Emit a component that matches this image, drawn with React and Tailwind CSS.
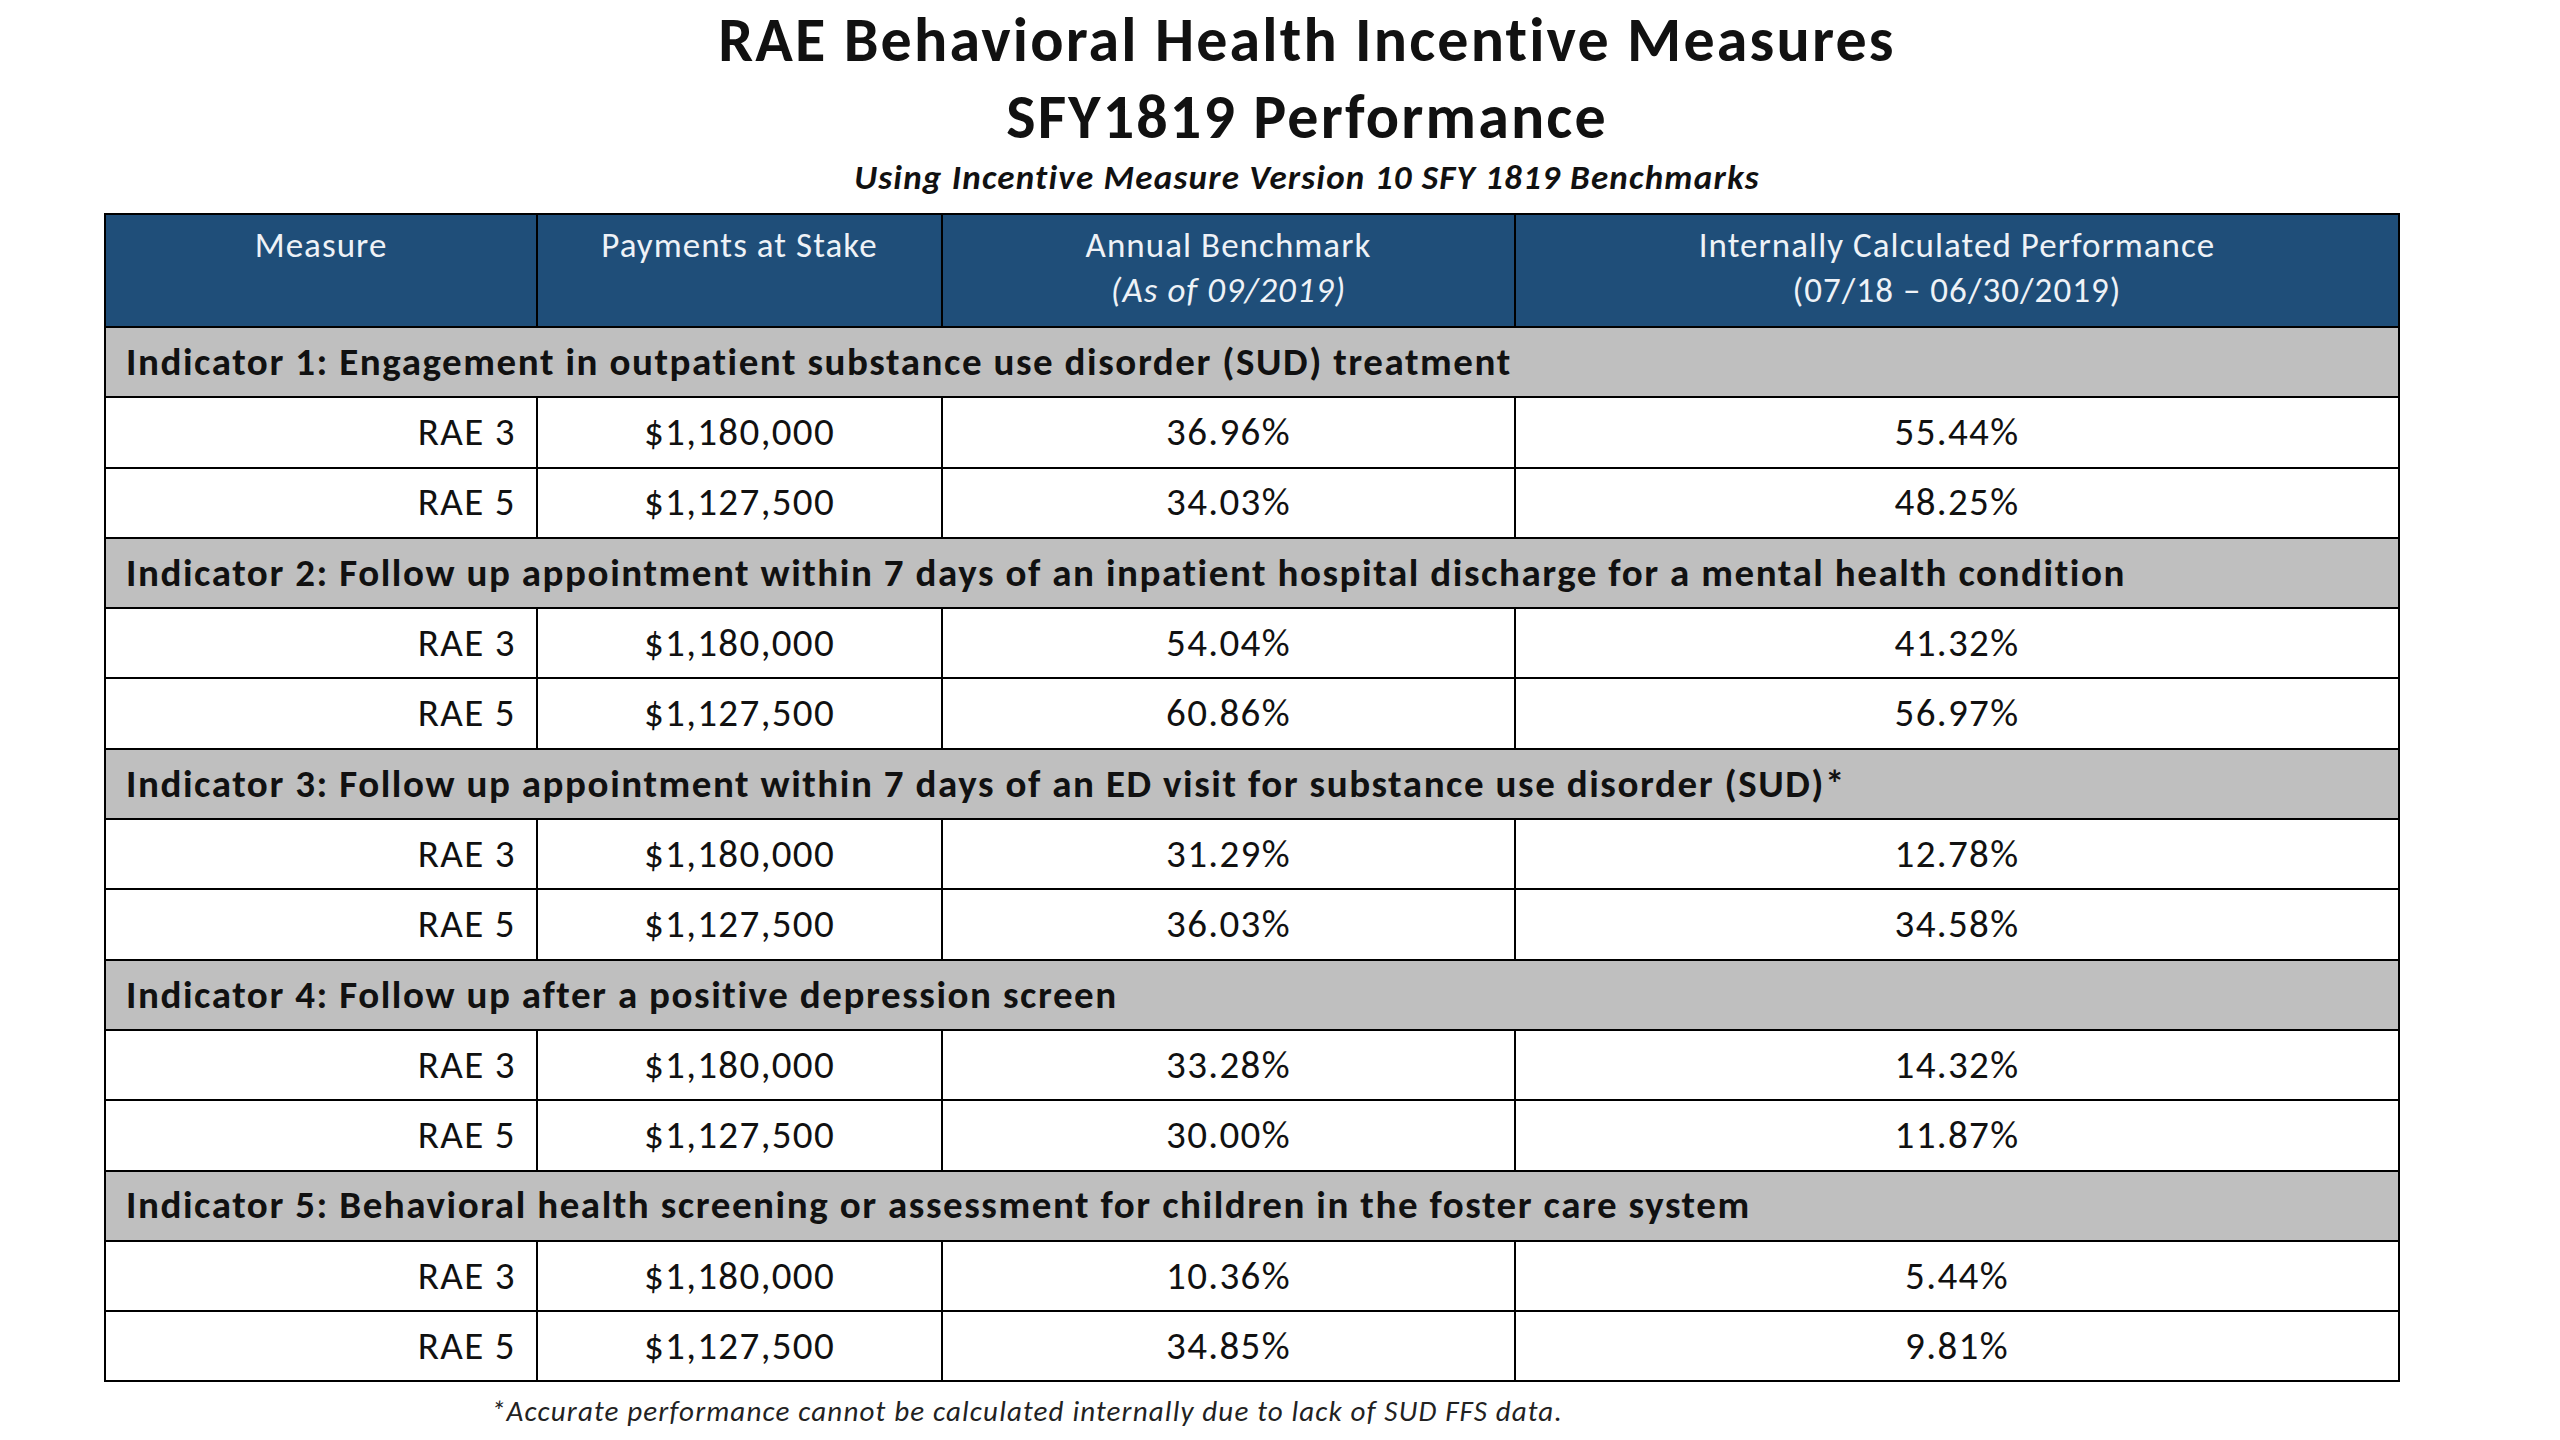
const indicators = [
  {
    title: "Indicator 1: Engagement in outpatient substance use disorder (SUD) treatment",
    rows: [
      { rae: "RAE 3", pay: "$1,180,000", bench: "36.96%", perf: "55.44%" },
      { rae: "RAE 5", pay: "$1,127,500", bench: "34.03%", perf: "48.25%" },
    ],
  },
  {
    title: "Indicator 2: Follow up appointment within 7 days of an inpatient hospital discharge for a mental health condition",
    rows: [
      { rae: "RAE 3", pay: "$1,180,000", bench: "54.04%", perf: "41.32%" },
      { rae: "RAE 5", pay: "$1,127,500", bench: "60.86%", perf: "56.97%" },
    ],
  },
  {
    title: "Indicator 3: Follow up appointment within 7 days of an ED visit for substance use disorder (SUD)*",
    rows: [
      { rae: "RAE 3", pay: "$1,180,000", bench: "31.29%", perf: "12.78%" },
      { rae: "RAE 5", pay: "$1,127,500", bench: "36.03%", perf: "34.58%" },
    ],
  },
  {
    title: "Indicator 4: Follow up after a positive depression screen",
    rows: [
      { rae: "RAE 3", pay: "$1,180,000", bench: "33.28%", perf: "14.32%" },
      { rae: "RAE 5", pay: "$1,127,500", bench: "30.00%", perf: "11.87%" },
    ],
  },
  {
    title: "Indicator 5: Behavioral health screening or assessment for children in the foster care system",
    rows: [
      { rae: "RAE 3", pay: "$1,180,000", bench: "10.36%", perf: "5.44%" },
      { rae: "RAE 5", pay: "$1,127,500", bench: "34.85%", perf: "9.81%" },
    ],
  },
];

export default function App() {
  return (
    <div className="w-[2560px] h-[1440px] bg-white overflow-hidden text-[#111] font-['Carlito','Open_Sans',sans-serif]">
      {/* Title */}
      <div className="pl-[54px] pt-[2px] text-center">
        <h1 className="text-[62px] leading-[77px] font-bold tracking-[0.035em]">RAE Behavioral Health Incentive Measures</h1>
        <h2 className="text-[62px] leading-[77px] font-bold tracking-[0.035em]">SFY1819 Performance</h2>
        <p className="text-[35px] leading-[42px] font-bold italic tracking-[0.035em]">
          Using Incentive Measure Version 10 SFY 1819 Benchmarks
        </p>
      </div>

      {/* Table */}
      <div className="ml-[104px] mt-[15px] w-[2294px]">
        <table className="w-full table-fixed border-collapse">
          <colgroup>
            <col className="w-[432px]" />
            <col className="w-[405px]" />
            <col className="w-[573px]" />
            <col className="w-[884px]" />
          </colgroup>
          <thead>
            <tr className="h-[113px] bg-[#1f4e79] text-[#eef2f7] text-[35px] leading-[45px] tracking-[0.03em]">
              <th className="border-2 border-black align-top pt-[8px] font-normal">Measure</th>
              <th className="border-2 border-black align-top pt-[8px] font-normal">Payments at Stake</th>
              <th className="border-2 border-black align-top pt-[8px] font-normal">
                Annual Benchmark
                <br />
                <span className="italic">(As of 09/2019)</span>
              </th>
              <th className="border-2 border-black align-top pt-[8px] font-normal">
                Internally Calculated Performance
                <br />
                (07/18 – 06/30/2019)
              </th>
            </tr>
          </thead>
          <tbody>
            {indicators.map((ind) => (
              <>
                <tr key={ind.title} className="h-[70.3px] bg-[#bfbfbf]">
                  <td colSpan={4} className="border-2 border-black pl-[20px] text-left text-[39px] font-bold tracking-[0.04em]">
                    {ind.title}
                  </td>
                </tr>
                {ind.rows.map((r) => (
                  <tr key={ind.title + r.rae} className="h-[70.3px] text-[39px] tracking-[0.035em]">
                    <td className="border-2 border-black pr-[20px] text-right">{r.rae}</td>
                    <td className="border-2 border-black text-center">{r.pay}</td>
                    <td className="border-2 border-black text-center">{r.bench}</td>
                    <td className="border-2 border-black text-center">{r.perf}</td>
                  </tr>
                ))}
              </>
            ))}
          </tbody>
        </table>
        <p className="pl-[387px] mt-[12px] text-[29px] leading-[34px] italic tracking-[0.04em] text-[#222]">
          *Accurate performance cannot be calculated internally due to lack of SUD FFS data.
        </p>
      </div>
    </div>
  );
}
